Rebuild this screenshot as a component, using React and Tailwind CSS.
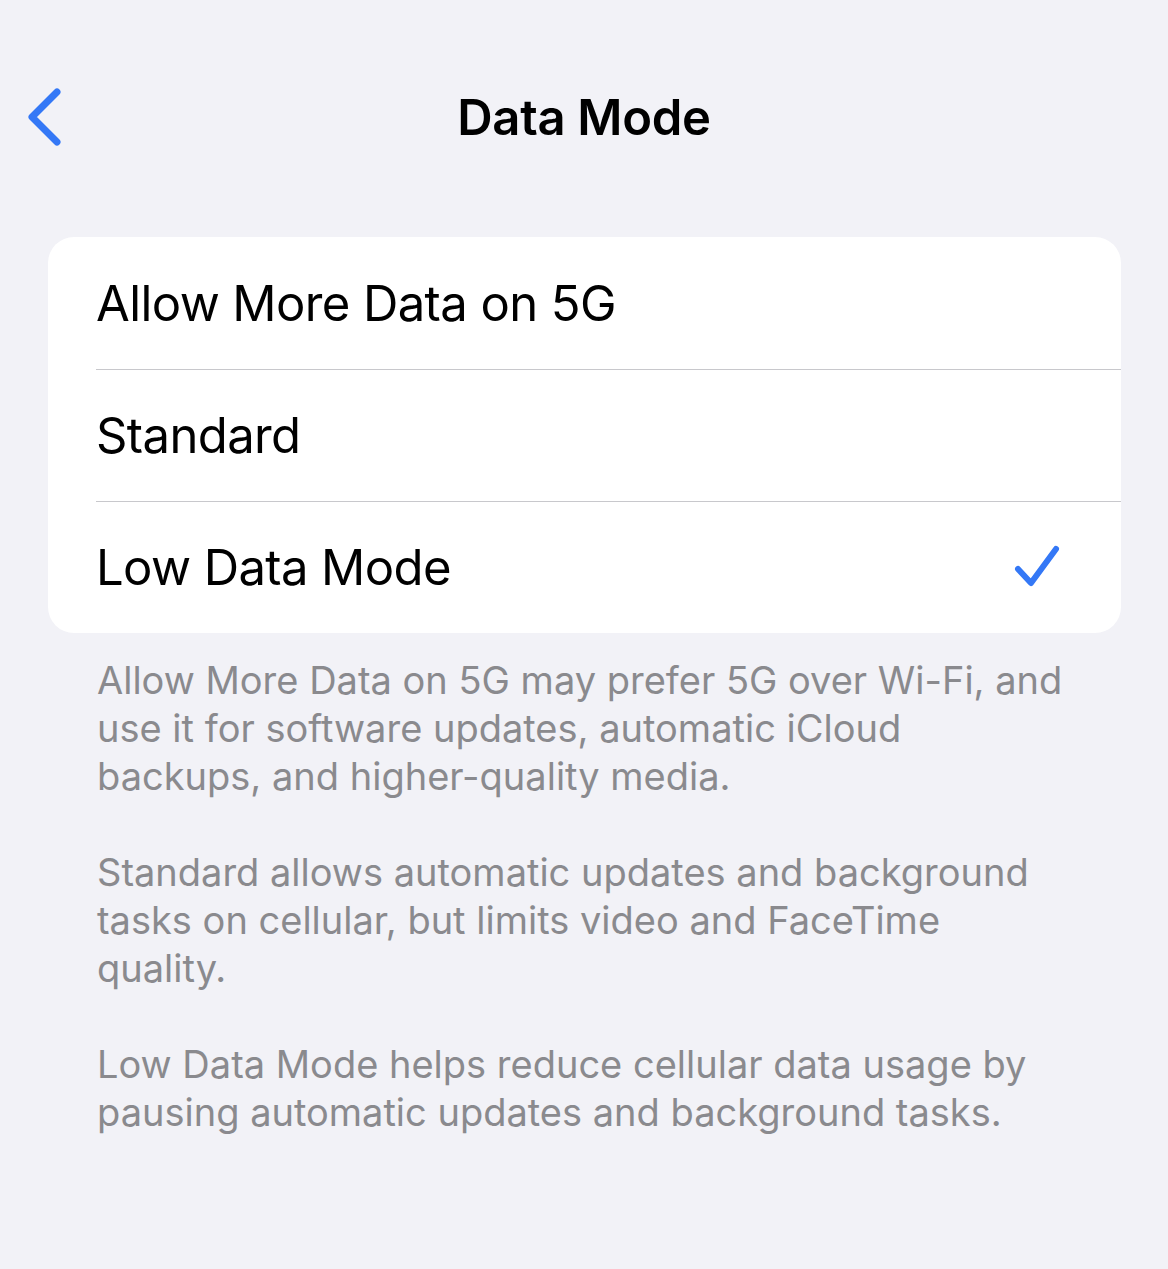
import React from 'react';

const font = { fontFamily: "Inter, 'Noto Sans', sans-serif" };

const options = [
  { label: 'Allow More Data on 5G', checked: false },
  { label: 'Standard', checked: false },
  { label: 'Low Data Mode', checked: true },
];

const notes = [
  'Allow More Data on 5G may prefer 5G over Wi-Fi, and use it for software updates, automatic iCloud backups, and higher-quality media.',
  'Standard allows automatic updates and background tasks on cellular, but limits video and FaceTime quality.',
  'Low Data Mode helps reduce cellular data usage by pausing automatic updates and background tasks.',
];

export default function App() {
  return (
    <div style={font} className="min-h-[1269px] w-[1168px] bg-[#f2f2f7] antialiased">
      {/* nav bar */}
      <div className="relative h-[237px] pt-[87px]">
        <button className="absolute left-[22px] top-[86px] w-[44px] h-[64px] flex items-center justify-center">
          <svg width="40" height="62" viewBox="0 0 40 62" fill="none">
            <path d="M33 5 L8 30 L33 55" stroke="#3478f6" strokeWidth="7" strokeLinecap="round" strokeLinejoin="round" />
          </svg>
        </button>
        <h1 className="text-center text-[49px] leading-[62px] font-semibold text-black tracking-[-0.3px]">Data Mode</h1>
      </div>

      {/* options card */}
      <div className="mx-[48px] w-[1073px] bg-white rounded-[26px] overflow-hidden">
        {options.map((o, i) => (
          <div key={o.label} className="pl-[97px] -ml-[49px]">
            <div className={`h-[132px] flex items-center justify-between pr-[58px] ${i > 0 ? 'border-t border-[#c8c8cc]' : ''}`}>
              <span className="text-[49px] leading-none text-black tracking-[-0.6px]">{o.label}</span>
              {o.checked && (
                <svg width="50" height="48" viewBox="0 0 50 48" fill="none">
                  <path d="M5 25 L18 39 L43 5" stroke="#3478f6" strokeWidth="6" strokeLinecap="round" strokeLinejoin="round" />
                </svg>
              )}
            </div>
          </div>
        ))}
      </div>

      {/* footnotes */}
      <div className="pl-[97px] pr-[94px] pt-[23px] flex flex-col gap-[48px]">
        {notes.map((n) => (
          <p key={n} className="text-[38px] leading-[48px] text-[#8a8a8e]">{n}</p>
        ))}
      </div>
    </div>
  );
}
